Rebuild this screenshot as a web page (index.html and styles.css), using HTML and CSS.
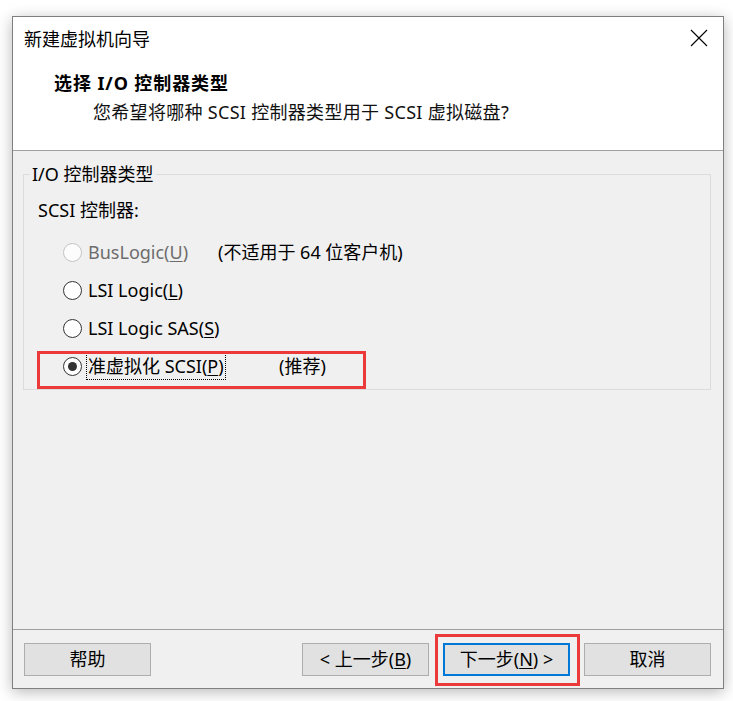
FILE: index.html
```html
<!DOCTYPE html>
<html lang="zh-CN">
<head>
<meta charset="utf-8">
<title>新建虚拟机向导</title>
<link rel="stylesheet" href="styles.css">
</head>
<body>
<div class="window">
  <div class="top">
    <div class="titlebar">
      <span class="wtitle">新建虚拟机向导</span>
      <svg class="close" width="18" height="18" viewBox="0 0 18 18"><path d="M1 1 L17 17 M17 1 L1 17" stroke="#000" stroke-width="1.1" fill="none"/></svg>
    </div>
    <div class="header">
      <div class="h-title">选择 I/O 控制器类型</div>
      <div class="h-sub">您希望将哪种 SCSI 控制器类型用于 SCSI 虚拟磁盘?</div>
    </div>
  </div>
  <div class="body">
    <fieldset class="group">
      <legend>I/O 控制器类型</legend>
      <div class="caption">SCSI 控制器:</div>
      <div class="opt disabled"><span class="radio"></span><span class="lbl w-bus">BusLogic(<u>U</u>)</span><span class="note">(不适用于 64 位客户机)</span></div>
      <div class="opt"><span class="radio"></span><span class="lbl">LSI Logic(<u>L</u>)</span></div>
      <div class="opt"><span class="radio"></span><span class="lbl">LSI Logic SAS(<u>S</u>)</span></div>
      <div class="opt checked"><span class="radio"></span><span class="lbl w-para"><span class="focus">准虚拟化 SCSI(<u>P</u>)</span></span><span class="note">(推荐)</span><span class="mark mark-row"></span></div>
    </fieldset>
  </div>
  <div class="footer">
    <button class="btn">帮助</button>
    <span class="spacer"></span>
    <button class="btn">&lt; 上一步(<u>B</u>)</button>
    <span class="next-wrap"><button class="btn default">下一步(<u>N</u>) &gt;</button><span class="mark mark-btn"></span></span>
    <button class="btn">取消</button>
  </div>
</div>
</body>
</html>
```

FILE: styles.css
```css
* { box-sizing: border-box; }
html, body { margin: 0; padding: 0; }
body {
  background: #ffffff;
  width: 733px;
  height: 701px;
  overflow: hidden;
  font-family: "Noto Sans", "Noto Sans CJK SC", sans-serif;
  font-size: 18px;
  color: #000;
}
.window {
  margin: 16px 0 0 12px;
  width: 712px;
  height: 673px;
  border: 1px solid #7f7f7f;
  background: #f0f0f0;
  box-shadow: 0 3px 14px rgba(0, 0, 0, 0.28);
  display: flex;
  flex-direction: column;
}
.top {
  height: 134px;
  background: #fff;
  border-bottom: 1px solid #a0a0a0;
}
.titlebar {
  height: 46px;
  display: flex;
  align-items: center;
  justify-content: space-between;
  padding: 0 15px 3px 11px;
}
.wtitle { line-height: 24px; }
.close { display: block; margin-top: -2px; }
.header {
  padding: 6px 0 0 41px;
}
.h-title {
  font-weight: 700;
  line-height: 29px;
  letter-spacing: 0.9px;
}
.h-sub {
  padding-left: 39px;
  line-height: 29px;
  color: #111;
  letter-spacing: 0.3px;
}
.body {
  height: 478px;
  padding: 11px 12px 0 10px;
}
.group {
  margin: 0;
  padding: 0 0 4px 0;
  border: 1px solid #dcdcdc;
  min-width: 0;
}
.group legend {
  margin-left: 6px;
  padding: 0 2px;
  line-height: 24px;
}
.caption {
  padding-left: 14px;
  line-height: 24px;
  margin-top: 12px;
  margin-bottom: 11px;
}
.opt {
  position: relative;
  height: 38px;
  display: flex;
  align-items: center;
  padding-left: 39px;
}
.radio {
  width: 19px;
  height: 19px;
  border-radius: 50%;
  border: 1px solid #333;
  background: #fff;
  flex: none;
  margin-right: 6px;
  display: flex;
  align-items: center;
  justify-content: center;
}
.checked .radio::after {
  content: "";
  width: 9px;
  height: 9px;
  border-radius: 50%;
  background: #333;
}
.disabled .radio {
  border-color: #c4c4c4;
  background: #fcfcfc;
}
.disabled .lbl { color: #6d6d6d; }
.lbl { line-height: 24px; white-space: nowrap; }
.w-bus { width: 130px; }
.w-para { width: 192px; margin-left: -1px; }
.focus {
  display: inline-block;
  outline: 1px dotted #000;
  padding: 0 1px 0 1px;
  line-height: 25px;
}
.note { line-height: 24px; white-space: nowrap; }
u { text-decoration: underline; text-underline-offset: 2px; }
.mark {
  position: absolute;
  border: 3px solid #ec3a3a;
  pointer-events: none;
}
.mark-row {
  left: 13px;
  top: 4px;
  width: 329px;
  height: 38px;
}
.footer {
  height: 59px;
  border-top: 1px solid #a0a0a0;
  display: flex;
  align-items: flex-start;
  padding: 13px 12px 0 11px;
  gap: 14px;
}
.spacer { flex: 1; }
.btn {
  width: 127px;
  height: 33px;
  background: #e1e1e1;
  border: 1px solid #adadad;
  font-family: inherit;
  font-size: 18px;
  color: #000;
  padding: 0 0 2px 0;
  line-height: 24px;
}
.btn.default { border: 2px solid #0078d7; }
.next-wrap { position: relative; display: block; height: 33px; }
.next-wrap .btn { display: block; }
.mark-btn {
  left: -8px;
  top: -9px;
  width: 145px;
  height: 52px;
}
```
